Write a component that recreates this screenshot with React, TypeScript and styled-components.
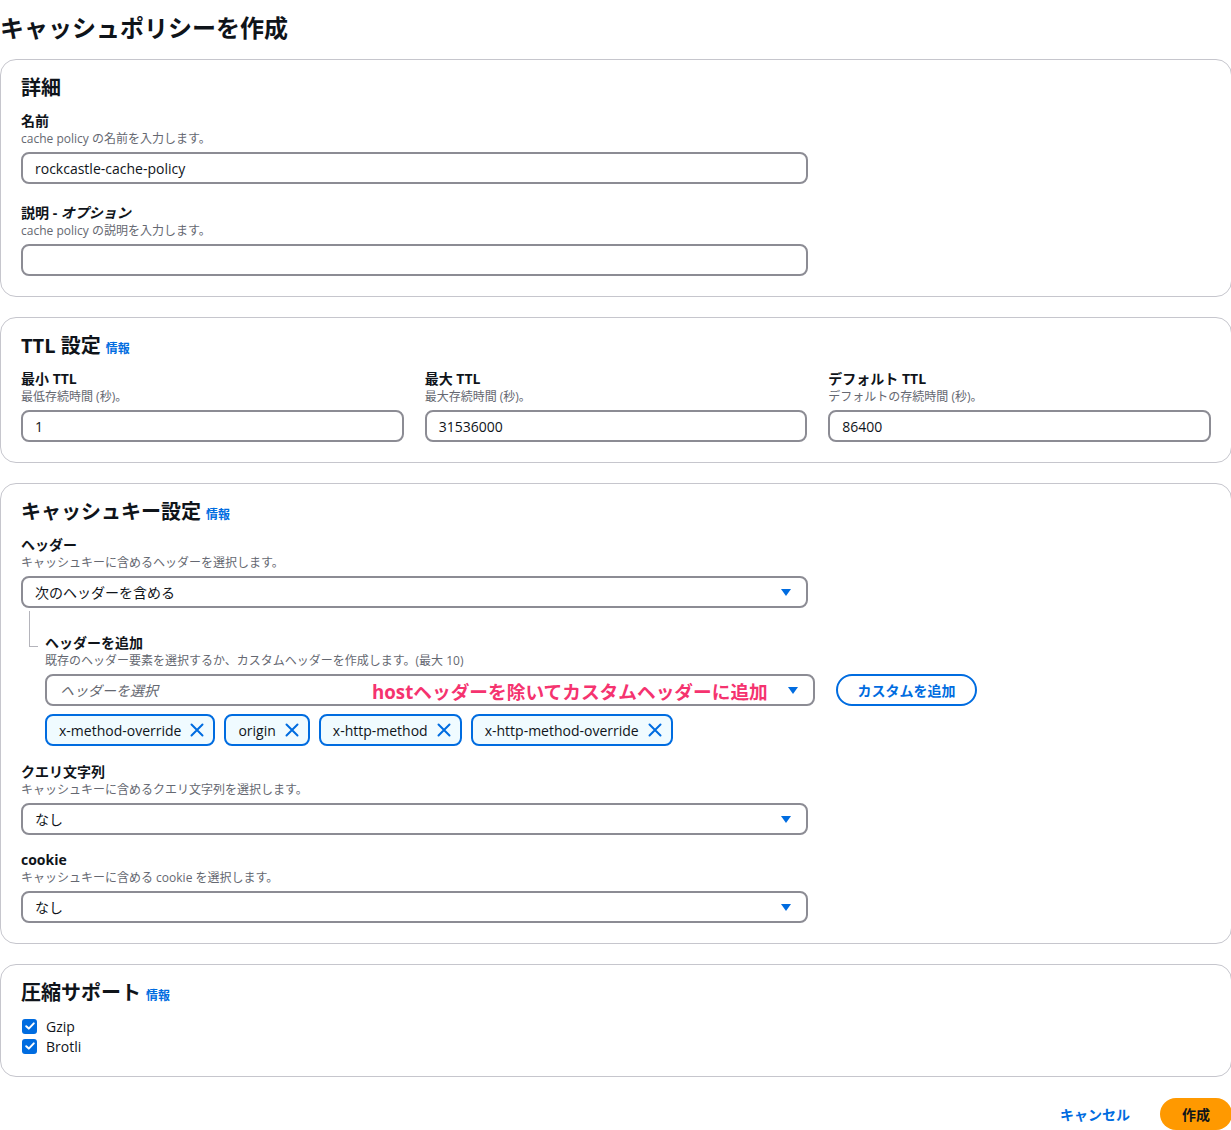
import * as React from 'react';
import styled, { createGlobalStyle } from 'styled-components';

const colors = {
  text: '#0f141a',
  secondary: '#656871',
  inputBorder: '#8c8c94',
  panelBorder: '#c6c6cd',
  blue: '#006ce0',
  tokenBg: '#f0fbff',
  orange: '#ff9900',
  annotation: '#f5336f',
  tree: '#b4b4bb',
};

const GlobalStyle = createGlobalStyle`
  html, body {
    margin: 0;
    padding: 0;
    background: #ffffff;
    overflow-x: hidden;
  }
  body {
    font-family: "Open Sans", "Noto Sans CJK JP", sans-serif;
    color: ${colors.text};
  }
  * {
    box-sizing: border-box;
  }
`;

const Caret = () => (
  <CaretSvg width="10" height="7" viewBox="0 0 10 7">
    <path d="M0 0 H10 L5 7 Z" fill={colors.blue} />
  </CaretSvg>
);

const CloseIcon = () => (
  <svg width="16" height="16" viewBox="0 0 16 16">
    <path
      d="M2.5 2.5 L13.5 13.5 M13.5 2.5 L2.5 13.5"
      stroke={colors.blue}
      strokeWidth="2"
      strokeLinecap="round"
      fill="none"
    />
  </svg>
);

const CheckIcon = () => (
  <svg width="14" height="14" viewBox="0 0 14 14">
    <path
      d="M3.2 7.2 L5.8 9.6 L10.8 4.4"
      stroke="#ffffff"
      strokeWidth="2"
      strokeLinecap="round"
      strokeLinejoin="round"
      fill="none"
    />
  </svg>
);

interface FieldProps {
  label: React.ReactNode;
  description: React.ReactNode;
  children: React.ReactNode;
}

const Field: React.FC<FieldProps> = ({ label, description, children }) => (
  <FieldWrap>
    <Label>{label}</Label>
    <Description>{description}</Description>
    <Control>{children}</Control>
  </FieldWrap>
);

const Select: React.FC<{ value: string }> = ({ value }) => (
  <SelectBox>
    <span>{value}</span>
    <Caret />
  </SelectBox>
);

const tokens = ['x-method-override', 'origin', 'x-http-method', 'x-http-method-override'];

export default function App() {
  return (
    <Page>
      <GlobalStyle />
      <Title>キャッシュポリシーを作成</Title>

      <Panel>
        <Heading>詳細</Heading>
        <Stack $gap={20}>
          <Field label="名前" description="cache policy の名前を入力します。">
            <Input $width={787}>rockcastle-cache-policy</Input>
          </Field>
          <Field
            label={
              <>
                説明 - <Italic>オプション</Italic>
              </>
            }
            description="cache policy の説明を入力します。"
          >
            <Input $width={787} />
          </Field>
        </Stack>
      </Panel>

      <Panel>
        <Heading>
          TTL 設定<InfoLink>情報</InfoLink>
        </Heading>
        <Columns>
          <Field label="最小 TTL" description="最低存続時間 (秒)。">
            <Input>1</Input>
          </Field>
          <Field label="最大 TTL" description="最大存続時間 (秒)。">
            <Input>31536000</Input>
          </Field>
          <Field label="デフォルト TTL" description="デフォルトの存続時間 (秒)。">
            <Input>86400</Input>
          </Field>
        </Columns>
      </Panel>

      <Panel>
        <Heading>
          キャッシュキー設定<InfoLink>情報</InfoLink>
        </Heading>
        <Stack $gap={16}>
          <div>
            <Field label="ヘッダー" description="キャッシュキーに含めるヘッダーを選択します。">
              <Select value="次のヘッダーを含める" />
            </Field>
            <Nested>
              <TreeLine />
              <Field
                label="ヘッダーを追加"
                description="既存のヘッダー要素を選択するか、カスタムヘッダーを作成します。(最大 10)"
              >
                <HeaderPicker>
                  <PickerBox>
                    <Placeholder>ヘッダーを選択</Placeholder>
                    <Annotation>hostヘッダーを除いてカスタムヘッダーに追加</Annotation>
                    <Caret />
                  </PickerBox>
                  <OutlineButton>カスタムを追加</OutlineButton>
                </HeaderPicker>
                <TokenList>
                  {tokens.map(t => (
                    <Token key={t}>
                      {t}
                      <CloseIcon />
                    </Token>
                  ))}
                </TokenList>
              </Field>
            </Nested>
          </div>
          <Field label="クエリ文字列" description="キャッシュキーに含めるクエリ文字列を選択します。">
            <Select value="なし" />
          </Field>
          <Field label="cookie" description="キャッシュキーに含める cookie を選択します。">
            <Select value="なし" />
          </Field>
        </Stack>
      </Panel>

      <Panel>
        <Heading>
          圧縮サポート<InfoLink>情報</InfoLink>
        </Heading>
        <CheckList>
          <CheckRow>
            <CheckBox>
              <CheckIcon />
            </CheckBox>
            Gzip
          </CheckRow>
          <CheckRow>
            <CheckBox>
              <CheckIcon />
            </CheckBox>
            Brotli
          </CheckRow>
        </CheckList>
      </Panel>

      <Actions>
        <LinkButton>キャンセル</LinkButton>
        <PrimaryButton>作成</PrimaryButton>
      </Actions>
    </Page>
  );
}

const Page = styled.div`
  width: 1232px;
  padding: 13px 0 0;
  display: flex;
  flex-direction: column;
`;

const Title = styled.h1`
  margin: 0 0 16px;
  font-size: 24px;
  line-height: 30px;
  font-weight: 700;
`;

const Panel = styled.section`
  border: 1px solid ${colors.panelBorder};
  border-radius: 16px;
  padding: 16px 20px 20px;
  margin-bottom: 20px;
`;

const Heading = styled.h2`
  margin: 0 0 12px;
  height: 24px;
  font-size: 20px;
  line-height: 24px;
  font-weight: 700;
`;

const InfoLink = styled.span`
  font-size: 12px;
  line-height: 1;
  font-weight: 700;
  color: ${colors.blue};
  margin-left: 5px;
`;

const Stack = styled.div<{ $gap: number }>`
  display: flex;
  flex-direction: column;
  gap: ${p => p.$gap}px;
`;

const Columns = styled.div`
  display: grid;
  grid-template-columns: repeat(3, 1fr);
  gap: 21px;
`;

const FieldWrap = styled.div`
  display: flex;
  flex-direction: column;
`;

const Label = styled.div`
  font-size: 14px;
  line-height: 18px;
  font-weight: 700;
`;

const Italic = styled.em`
  font-style: italic;
`;

const Description = styled.div`
  margin-top: 1px;
  font-size: 12px;
  line-height: 16px;
  color: ${colors.secondary};
`;

const Control = styled.div`
  margin-top: 5px;
`;

const Input = styled.div<{ $width?: number }>`
  width: ${p => (p.$width ? `${p.$width}px` : '100%')};
  height: 32px;
  border: 2px solid ${colors.inputBorder};
  border-radius: 8px;
  padding: 0 12px;
  display: flex;
  align-items: center;
  font-size: 14px;
`;

const SelectBox = styled.div`
  width: 787px;
  height: 32px;
  border: 2px solid ${colors.inputBorder};
  border-radius: 8px;
  padding: 0 15px 0 12px;
  display: flex;
  align-items: center;
  justify-content: space-between;
  font-size: 14px;
`;

const CaretSvg = styled.svg`
  flex: none;
`;

const Nested = styled.div`
  position: relative;
  padding: 26px 0 0 24px;
  margin-bottom: 1px;
`;

const TreeLine = styled.div`
  position: absolute;
  left: 8px;
  top: 3px;
  width: 9px;
  height: 36px;
  border-left: 1px solid ${colors.tree};
  border-bottom: 1px solid ${colors.tree};
`;

const HeaderPicker = styled.div`
  display: flex;
  align-items: center;
  gap: 21px;
`;

const PickerBox = styled.div`
  position: relative;
  width: 770px;
  height: 32px;
  border: 2px solid ${colors.inputBorder};
  border-radius: 8px;
  padding: 0 15px 0 13px;
  display: flex;
  align-items: center;
  justify-content: space-between;
  font-size: 14px;
`;

const Placeholder = styled.span`
  color: ${colors.secondary};
  font-style: italic;
`;

const Annotation = styled.span`
  position: absolute;
  left: 325px;
  top: 50%;
  transform: translateY(-50%);
  color: ${colors.annotation};
  font-size: 18.7px;
  font-weight: 700;
  white-space: nowrap;
`;

const OutlineButton = styled.button`
  height: 32px;
  width: 141px;
  border: 2px solid ${colors.blue};
  border-radius: 20px;
  background: #ffffff;
  color: ${colors.blue};
  font-family: inherit;
  font-size: 14px;
  font-weight: 700;
  padding: 0;
`;

const TokenList = styled.div`
  margin-top: 8px;
  display: flex;
  gap: 9px;
`;

const Token = styled.div`
  height: 32px;
  border: 2px solid ${colors.blue};
  border-radius: 8px;
  background: ${colors.tokenBg};
  padding: 0 8px 0 12px;
  display: flex;
  align-items: center;
  gap: 8px;
  font-size: 14px;
`;

const CheckList = styled.div`
  display: flex;
  flex-direction: column;
  margin-top: -1px;
`;

const CheckRow = styled.div`
  height: 20px;
  display: flex;
  align-items: center;
  gap: 9px;
  font-size: 14px;
`;

const CheckBox = styled.span`
  width: 15px;
  height: 15px;
  margin-left: 1px;
  border-radius: 3px;
  background: ${colors.blue};
  display: flex;
  align-items: center;
  justify-content: center;
`;

const Actions = styled.div`
  display: flex;
  justify-content: flex-end;
  align-items: center;
  gap: 30px;
  margin-top: 1px;
`;

const LinkButton = styled.button`
  border: none;
  background: none;
  padding: 0;
  color: ${colors.blue};
  font-family: inherit;
  font-size: 14px;
  font-weight: 700;
`;

const PrimaryButton = styled.button`
  height: 32px;
  width: 72px;
  border: none;
  border-radius: 16px;
  background: ${colors.orange};
  color: ${colors.text};
  font-family: inherit;
  font-size: 14px;
  font-weight: 700;
  padding: 0;
`;
